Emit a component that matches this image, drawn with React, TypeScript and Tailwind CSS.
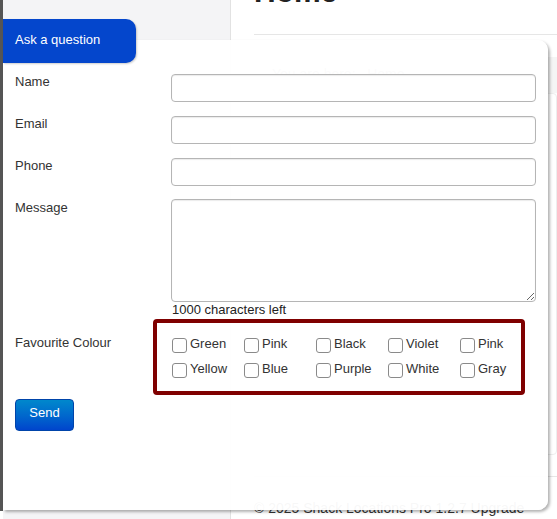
import React from "react";

const colours = [
  ["Green", "Pink", "Black", "Violet", "Pink"],
  ["Yellow", "Blue", "Purple", "White", "Gray"],
];

function Field({ label, children, className = "" }: { label: string; children: React.ReactNode; className?: string }) {
  return (
    <div className={"flex " + className}>
      <div className="w-[156px] -mt-[1px] text-[13px] leading-[18px] text-[#333]">{label}</div>
      <div>{children}</div>
    </div>
  );
}

export default function App() {
  return (
    <div
      className="relative w-[557px] h-[519px] overflow-hidden bg-white"
      style={{ fontFamily: '"Liberation Sans", Arial, Helvetica, sans-serif' }}
    >
      {/* background page */}
      <div className="flex h-full">
        <div className="w-[3px] h-[511px] bg-[#555]" />
        <div className="w-[228px] h-full bg-[#f4f4f6] border-r border-[#e2e2e2]" />
        <div className="flex-1 flex flex-col">
          <div className="ml-[23px] border-b border-[#e6e6e6] h-[35px] flex items-end">
            <h1 className="text-[30px] font-bold leading-[36px] text-[#222] mb-[24px]">Home</h1>
          </div>
          <div className="mt-[22px] ml-[23px] h-[36px] bg-[#f5f5f5] flex items-center pl-[18px] text-[14px] text-[#999]">
            You are here: &nbsp; Home
          </div>
          <div className="h-[365px] border border-[#eee] rounded-[4px] mt-[0px]" />
          <div className="ml-[23px] mt-[21px] border-t border-[#e6e6e6] pt-[21px] text-[14px] text-[#333]">
            © 2025 Shack Locations Pro 1.2.7 Upgrade
          </div>
        </div>
      </div>

      {/* overlay panel */}
      <div className="absolute left-[3px] top-[40px] w-[545px] h-[470px] bg-white/[0.96] rounded-r-[10px] shadow-[2px_2px_3px_rgba(0,0,0,0.3)] pt-[34px] pl-[12px]">
        <Field label="Name" className="mb-[14px]">
          <input className="w-[365px] h-[28px] border border-[#b5b5b5] rounded-[4px] bg-white shadow-[inset_0_1px_1px_rgba(0,0,0,0.08)]" />
        </Field>
        <Field label="Email" className="mb-[14px]">
          <input className="w-[365px] h-[28px] border border-[#b5b5b5] rounded-[4px] bg-white shadow-[inset_0_1px_1px_rgba(0,0,0,0.08)]" />
        </Field>
        <Field label="Phone" className="mb-[14px]">
          <input className="w-[365px] h-[28px] border border-[#b5b5b5] rounded-[4px] bg-white shadow-[inset_0_1px_1px_rgba(0,0,0,0.08)]" />
        </Field>
        <Field label="Message">
          <textarea className="block w-[365px] h-[103px] -mt-[1px] border border-[#b5b5b5] rounded-[4px] bg-white shadow-[inset_0_1px_1px_rgba(0,0,0,0.08)]" />
          <div className="text-[13px] leading-[16px] pl-[1px] text-[#222]">1000 characters left</div>
        </Field>
        <div className="flex mt-[1px]">
          <div className="w-[138px] pt-[15px] text-[13px] leading-[18px] text-[#333]">Favourite Colour</div>
          <div className="w-[372px] h-[76px] border-[4px] border-[#7f0000] rounded-[4px] pl-[15px] pt-[13px]">
            {colours.map((row, i) => (
              <div key={i} className={"flex " + (i === 0 ? "mb-[8px]" : "")}>
                {row.map((c, j) => (
                  <label key={j} className="w-[72px] shrink-0 flex items-center text-[13px] leading-[16px] text-[#333]">
                    <span className="w-[15px] h-[15px] border border-[#8a8a8a] rounded-[3px] bg-white mr-[3px] mt-[2px] shrink-0" />
                    <span className="-mt-[2px]">{c}</span>
                  </label>
                ))}
              </div>
            ))}
          </div>
        </div>
        <button className="mt-[4px] w-[59px] h-[32px] rounded-[4px] border border-[#0044aa] bg-gradient-to-b from-[#0088cc] to-[#0044cc] text-white text-[13px] leading-[18px] pb-[5px]">
          Send
        </button>
      </div>

      {/* tab */}
      <div className="absolute left-[3px] top-[19px] w-[133px] h-[44px] bg-[#0446cc] rounded-r-[10px] shadow-[1px_1px_2px_rgba(0,0,0,0.2)] pl-[12px] pb-[2px] flex items-center text-white text-[13px]">
        Ask a question
      </div>
    </div>
  );
}
